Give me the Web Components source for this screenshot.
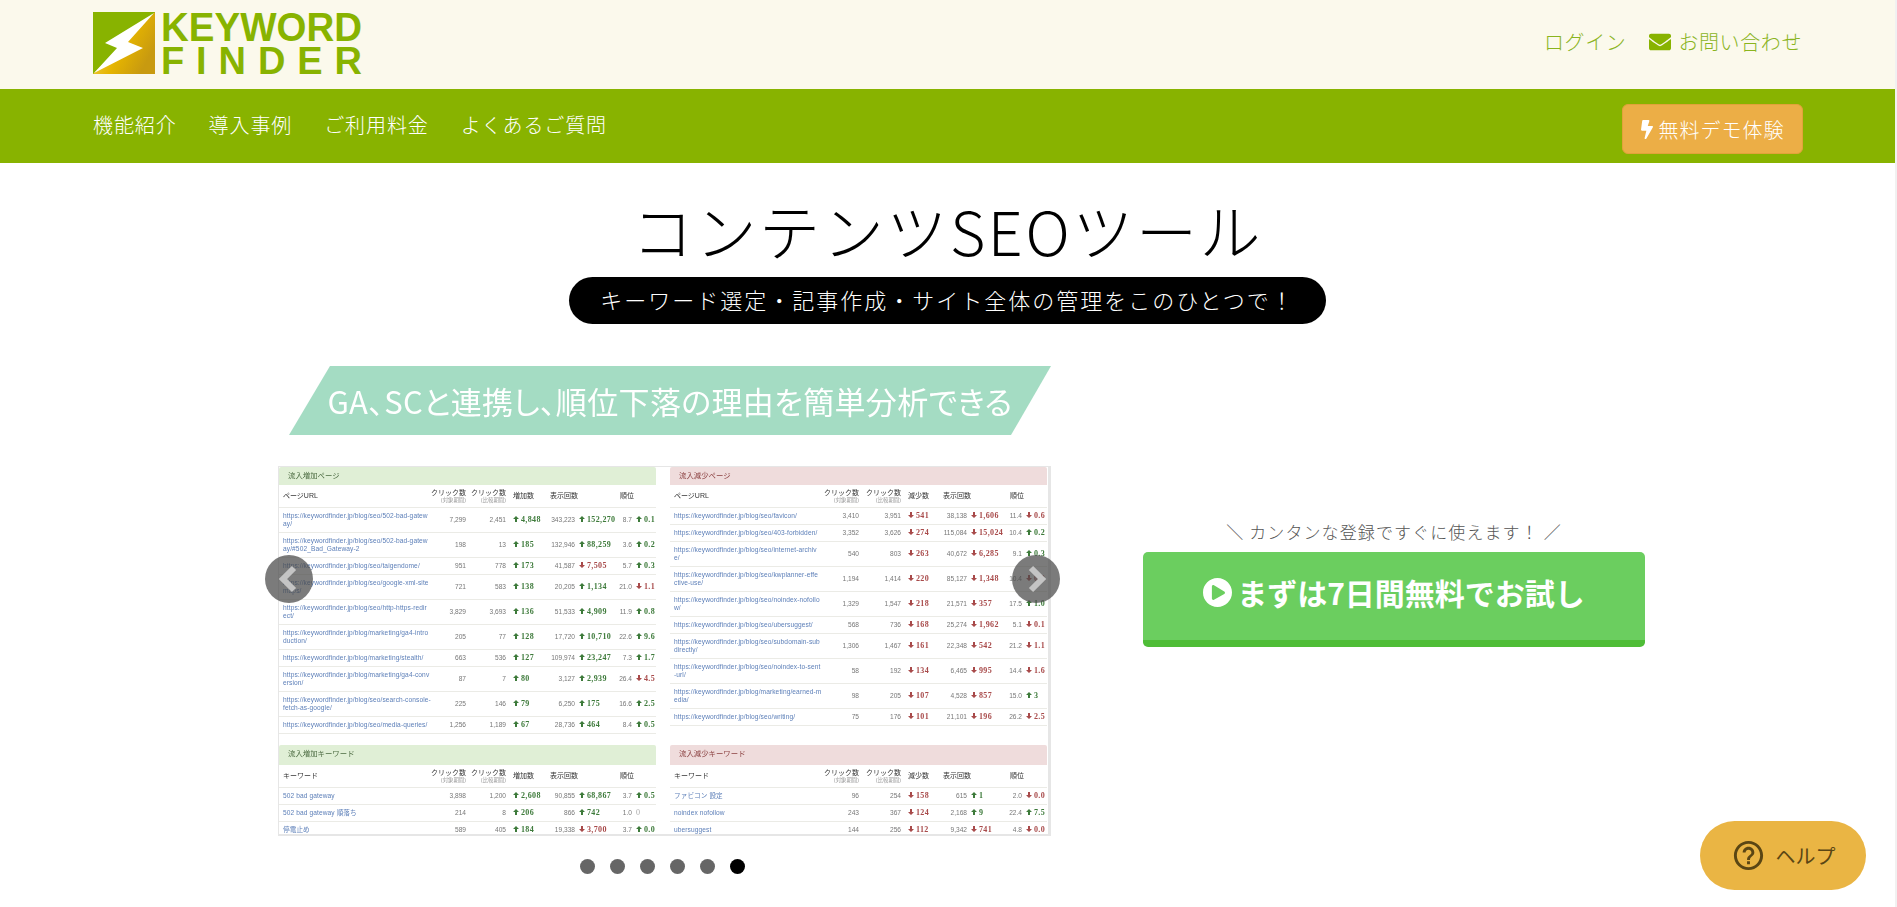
<!DOCTYPE html>
<html lang="ja">
<head>
<meta charset="utf-8">
<title>KEYWORD FINDER</title>
<style>
    html, body { margin: 0; height: 907px; overflow: hidden; background: #fff; }
    body { font-family: "Noto Sans CJK JP", "Noto Sans", sans-serif; }
</style>
</head>
<body>
<kf-page>
    <kf-header></kf-header>
    <kf-nav></kf-nav>
    <kf-hero></kf-hero>
    <kf-help></kf-help>
</kf-page>

<script>
const BLOG = 'https://keywordfinder.jp/blog/';

const PAGES_UP = [
    ['seo/502-bad-gatew\nay/', '7,299', '2,451', '+4,848', '343,223', '+152,270', '8.7', '+0.1'],
    ['seo/502-bad-gatew\nay/#502_Bad_Gateway-2', '198', '13', '+185', '132,946', '+88,259', '3.6', '+0.2'],
    ['seo/taigendome/', '951', '778', '+173', '41,587', '-7,505', '5.7', '+0.3'],
    ['seo/google-xml-site\nmaps/', '721', '583', '+138', '20,205', '+1,134', '21.0', '-1.1'],
    ['seo/http-https-redir\nect/', '3,829', '3,693', '+136', '51,533', '+4,909', '11.9', '+0.8'],
    ['marketing/ga4-intro\nduction/', '205', '77', '+128', '17,720', '+10,710', '22.6', '+9.6'],
    ['marketing/stealth/', '663', '536', '+127', '109,974', '+23,247', '7.3', '+1.7'],
    ['marketing/ga4-conv\nersion/', '87', '7', '+80', '3,127', '+2,939', '26.4', '-4.5'],
    ['seo/search-console-\nfetch-as-google/', '225', '146', '+79', '6,250', '+175', '16.6', '+2.5'],
    ['seo/media-queries/', '1,256', '1,189', '+67', '28,736', '+464', '8.4', '+0.5']
].map(r => [BLOG + r[0], ...r.slice(1)]);

const PAGES_DOWN = [
    ['seo/favicon/', '3,410', '3,951', '-541', '38,138', '-1,606', '11.4', '-0.6'],
    ['seo/403-forbidden/', '3,352', '3,626', '-274', '115,084', '-15,024', '10.4', '+0.2'],
    ['seo/internet-archiv\ne/', '540', '803', '-263', '40,672', '-6,285', '9.1', '+0.3'],
    ['seo/kwplanner-effe\nctive-use/', '1,194', '1,414', '-220', '85,127', '-1,348', '10.4', '-0.2'],
    ['seo/noindex-nofollo\nw/', '1,329', '1,547', '-218', '21,571', '-357', '17.5', '+1.0'],
    ['seo/ubersuggest/', '568', '736', '-168', '25,274', '-1,962', '5.1', '-0.1'],
    ['seo/subdomain-sub\ndirectly/', '1,306', '1,467', '-161', '22,348', '-542', '21.2', '-1.1'],
    ['seo/noindex-to-sent\n-url/', '58', '192', '-134', '6,465', '-995', '14.4', '-1.6'],
    ['marketing/earned-m\nedia/', '98', '205', '-107', '4,528', '-857', '15.0', '+3'],
    ['seo/writing/', '75', '176', '-101', '21,101', '-196', '26.2', '-2.5']
].map(r => [BLOG + r[0], ...r.slice(1)]);

const KEYWORDS_UP = [
    ['502 bad gateway', '3,898', '1,200', '+2,608', '90,855', '+68,867', '3.7', '+0.5'],
    ['502 bad gateway 順落ち', '214', '8', '+206', '866', '+742', '1.0', '0'],
    ['停電止め', '589', '405', '+184', '19,338', '-3,700', '3.7', '+0.0']
];

const KEYWORDS_DOWN = [
    ['ファビコン 設定', '96', '254', '-158', '615', '+1', '2.0', '-0.0'],
    ['noindex nofollow', '243', '367', '-124', '2,168', '+9', '22.4', '+7.5'],
    ['ubersuggest', '144', '256', '-112', '9,342', '-741', '4.8', '-0.0']
];

class KfPage extends HTMLElement {
    constructor() {
        super();
        this.attachShadow({ mode: 'open' });
        this.shadowRoot.innerHTML = `
            <style>
                :host {
                    display: block;
                    height: 907px;
                    overflow: hidden;
                    border-right: 2px solid #f1f1f1;
                }
            </style>
            <slot></slot>
        `;
    }
}

class KfHeader extends HTMLElement {
    constructor() {
        super();
        this.attachShadow({ mode: 'open' });
        this.shadowRoot.innerHTML = `
            <style>
                :host {
                    display: flex;
                    justify-content: space-between;
                    height: 89px;
                    padding: 12px 93px 0;
                    box-sizing: border-box;
                    background: #fbf9ec;
                    color: #8ab41e;
                }
                svg.logo { display: block; width: 270px; height: 63px; overflow: visible; }
                svg.logo text { font-family: "Liberation Sans", sans-serif; font-weight: 700; fill: #88b300; }
                .links {
                    display: flex;
                    align-items: center;
                    height: 44px;
                    font-size: 20px;
                    font-weight: 300;
                    letter-spacing: .6px;
                    line-height: 30px;
                    margin-top: 8px;
                }
                .login { margin-right: 23px; }
                .mail { width: 22px; height: 22px; margin-right: 7px; fill: #88b300; }
            </style>
            <svg class="logo" viewBox="0 0 270 63" role="img" aria-label="KEYWORD FINDER">
                <defs>
                    <linearGradient id="gold" x1="0" y1="0" x2="1" y2=".55">
                        <stop offset="0" stop-color="#f6e27a"/>
                        <stop offset=".62" stop-color="#e5b400"/>
                        <stop offset="1" stop-color="#c89a10"/>
                    </linearGradient>
                </defs>
                <rect width="62" height="62" fill="#88b300"/>
                <polygon points="62,0 62,62 0,62" fill="url(#gold)"/>
                <polygon points="61,1 12,31 24,36 1,61 50,36 35,30" fill="#fff"/>
                <text x="68" y="29" font-size="40" textLength="201" lengthAdjust="spacingAndGlyphs">KEYWORD</text>
                <text x="68" y="62" font-size="38" textLength="201" lengthAdjust="spacing">FINDER</text>
            </svg>
            <div class="links">
                <span class="login">ログイン</span>
                <svg class="mail" viewBox="0 0 512 512"><path d="M502.3 190.8c3.9-3.1 9.7-.2 9.7 4.7V400c0 26.5-21.5 48-48 48H48c-26.5 0-48-21.5-48-48V195.6c0-5 5.7-7.8 9.7-4.7 22.4 17.4 52.1 39.5 154.1 113.6 21.1 15.4 56.7 47.8 92.2 47.6 35.7.3 72-32.8 92.3-47.6 102-74.1 131.6-96.3 154-113.7zM256 320c23.2.4 56.6-29.2 73.4-41.4 132.7-96.3 142.8-104.7 173.4-128.7 5.8-4.5 9.2-11.5 9.2-18.9v-19c0-26.5-21.5-48-48-48H48C21.5 64 0 85.5 0 112v19c0 7.4 3.4 14.3 9.2 18.9 30.6 23.9 40.7 32.4 173.4 128.7 16.8 12.2 50.2 41.8 73.4 41.4z"/></svg>
                <span>お問い合わせ</span>
            </div>
        `;
    }
}

class KfNav extends HTMLElement {
    constructor() {
        super();
        this.attachShadow({ mode: 'open' });
        this.shadowRoot.innerHTML = `
            <style>
                :host {
                    display: flex;
                    justify-content: space-between;
                    align-items: flex-start;
                    height: 74px;
                    padding: 0 92px 0 93px;
                    box-sizing: border-box;
                    background: #88b300;
                    color: #fff;
                }
                ul {
                    display: flex;
                    gap: 32px;
                    list-style: none;
                    margin: 0;
                    padding: 21px 0 0;
                    font-size: 20px;
                    font-weight: 300;
                    letter-spacing: .9px;
                    line-height: 30px;
                }
                .demo {
                    display: flex;
                    align-items: center;
                    justify-content: center;
                    gap: 6px;
                    width: 181px;
                    height: 50px;
                    margin-top: 15px;
                    box-sizing: border-box;
                    background: #ecae46;
                    border: 1px solid #e2a23a;
                    border-radius: 6px;
                    font-size: 20px;
                    font-weight: 300;
                    letter-spacing: 1px;
                }
                .demo svg { width: 12px; height: 21px; fill: #fff; }
            </style>
            <ul>
                <li>機能紹介</li>
                <li>導入事例</li>
                <li>ご利用料金</li>
                <li>よくあるご質問</li>
            </ul>
            <div class="demo">
                <svg viewBox="0 0 320 512"><path d="M296 160H180.6l42.6-129.8C227.2 15 215.7 0 200 0H56C44 0 33.8 8.9 32.2 20.8l-32 240C-1.7 275.2 9.5 288 24 288h118.7L96.6 482.5c-3.6 15.2 8 29.5 23.3 29.5 8.4 0 16.4-4.4 20.8-12l176-304c9.3-15.9-2.2-36-20.7-36z"/></svg>
                <span>無料デモ体験</span>
            </div>
        `;
    }
}

class KfHero extends HTMLElement {
    constructor() {
        super();
        this.attachShadow({ mode: 'open' });
        this.shadowRoot.innerHTML = `
            <style>
                :host { display: block; }
                .head { display: flex; flex-direction: column; align-items: center; padding-top: 32px; }
                h1 {
                    margin: 0;
                    font-size: 61px;
                    font-weight: 300;
                    line-height: 70px;
                    letter-spacing: 2.6px;
                    color: #000;
                }
                .pill {
                    margin-top: 12px;
                    height: 47px;
                    line-height: 45px;
                    padding: 0 31px;
                    background: #000;
                    color: #fff;
                    border-radius: 24px;
                    font-size: 22px;
                    font-weight: 300;
                    letter-spacing: 2px;
                }
                .row {
                    display: grid;
                    grid-template-columns: 773px 502px;
                    column-gap: 92px;
                    padding: 42px 0 0 278px;
                }
            </style>
            <div class="head">
                <h1>コンテンツSEOツール</h1>
                <div class="pill">キーワード選定・記事作成・サイト全体の管理をこのひとつで！</div>
            </div>
            <div class="row">
                <kf-slider></kf-slider>
                <kf-cta></kf-cta>
            </div>
        `;
    }
}

class KfSlider extends HTMLElement {
    constructor() {
        super();
        this.attachShadow({ mode: 'open' });
        this.shadowRoot.innerHTML = `
            <style>
                :host { display: block; position: relative; }
                .banner {
                    margin-left: 11px;
                    height: 69px;
                    line-height: 69px;
                    background: #a4dcc3;
                    clip-path: polygon(41px 0, 100% 0, 722px 100%, 0 100%);
                    color: #fff;
                    text-align: center;
                    font-size: 31px;
                    font-weight: 400;
                    letter-spacing: .35px;
                    font-feature-settings: "palt";
                    filter: blur(.35px);
                }
                .slide {
                    position: relative;
                    display: grid;
                    grid-template-columns: 377px 377px;
                    grid-template-rows: 278px 89px;
                    column-gap: 14px;
                    align-content: start;
                    width: 773px;
                    height: 370px;
                    margin-top: 31px;
                    box-sizing: border-box;
                    overflow: hidden;
                    background: #fff;
                    border-style: solid;
                    border-color: #e6e6e6;
                    border-width: 1px 3px 2px 1px;
                    filter: blur(.45px);
                }
                .arrow {
                    position: absolute;
                    top: 189px;
                    width: 48px;
                    height: 48px;
                    border-radius: 50%;
                    background: rgba(72, 72, 72, .72);
                    display: flex;
                    align-items: center;
                    justify-content: center;
                    filter: blur(.4px);
                }
                .arrow svg { width: 22px; height: 28px; }
                .arrow.prev { left: -13px; }
                .arrow.next { left: 734px; }
                .dots {
                    display: flex;
                    gap: 15px;
                    margin: 23px 0 0 302px;
                }
                .dots i { display: block; width: 15px; height: 15px; border-radius: 50%; background: #666; }
                .dots i:last-child { background: #000; }
            </style>
            <div class="banner">GA、SCと連携し、順位下落の理由を簡単分析できる</div>
            <div class="slide"></div>
            <div class="arrow prev"><svg viewBox="0 0 22 28"><path d="M16 3 5 14l11 11" fill="none" stroke="#c4c4c4" stroke-width="6"/></svg></div>
            <div class="arrow next"><svg viewBox="0 0 22 28"><path d="M6 3l11 11L6 25" fill="none" stroke="#c4c4c4" stroke-width="6"/></svg></div>
            <div class="dots"><i></i><i></i><i></i><i></i><i></i><i></i></div>
        `;

        const slide = this.shadowRoot.querySelector('.slide');
        const panels = [
            ['up', '流入増加ページ', 'ページURL', PAGES_UP],
            ['down', '流入減少ページ', 'ページURL', PAGES_DOWN],
            ['up', '流入増加キーワード', 'キーワード', KEYWORDS_UP],
            ['down', '流入減少キーワード', 'キーワード', KEYWORDS_DOWN]
        ];
        panels.forEach(([tone, title, label, rows]) => {
            const panel = document.createElement('kf-panel');
            panel.setAttribute('tone', tone);
            panel.setAttribute('heading', title);
            panel.setAttribute('label', label);
            panel.rows = rows;
            slide.appendChild(panel);
        });
    }
}

class KfPanel extends HTMLElement {
    constructor() {
        super();
        this.attachShadow({ mode: 'open' });
    }

    connectedCallback() {
        this.render();
    }

    deltaCell(value, extraClass) {
        const sign = value[0];
        if (sign !== '+' && sign !== '-') {
            return `<span class="d zero ${extraClass}">${value}</span>`;
        }
        const points = sign === '+' ? '3,0 6,3 4,3 4,6 2,6 2,3 0,3' : '3,6 6,3 4,3 4,0 2,0 2,3 0,3';
        const tone = sign === '+' ? 'plus' : 'minus';
        return `<span class="d ${tone} ${extraClass}"><svg viewBox="0 0 6 6"><polygon points="${points}"/></svg>${value.slice(1)}</span>`;
    }

    render() {
        const down = this.getAttribute('tone') === 'down';
        const keywords = this.getAttribute('label') === 'キーワード';
        const rows = (this.rows || []).map(r => `
            <div class="row">
                <span class="url">${r[0]}</span>
                <span class="n">${r[1]}</span>
                <span class="n">${r[2]}</span>
                ${this.deltaCell(r[3], 'd1')}
                <span class="n">${r[4]}</span>
                ${this.deltaCell(r[5], 'd2')}
                <span class="n">${r[6]}</span>
                ${this.deltaCell(r[7], 'd2')}
            </div>
        `).join('');

        this.shadowRoot.innerHTML = `
            <style>
                :host {
                    display: block;
                    font-family: "Liberation Sans", "Noto Sans CJK JP", sans-serif;
                    font-size: 6.6px;
                    line-height: 8px;
                    color: #666;
                    --cols: ${down ? '156px 29px 42px 49px 17px 34px 21px 25px' : '149px 34px 40px 44px 25px 41px 16px 22px'};
                    --imp-shift: ${down ? '-7px' : '0px'};
                    --rank-shift: ${down ? '9px' : '4px'};
                }
                .title {
                    height: ${keywords ? '20px' : '18px'};
                    line-height: 18px;
                    padding-left: 9px;
                    font-size: 7.4px;
                    border-radius: 2px 2px 0 0;
                    background: ${down ? '#efdcdc' : '#e0efd6'};
                    color: ${down ? '#8a3f3f' : '#4c6b42'};
                }
                .row, .head {
                    display: grid;
                    grid-template-columns: var(--cols);
                    align-items: center;
                    padding: 4px 0 4px 4px;
                    border-bottom: 1px solid #ebebe6;
                }
                .head {
                    height: 23px;
                    box-sizing: border-box;
                    padding-top: 0;
                    padding-bottom: 0;
                    color: #333;
                    font-size: 7px;
                }
                .head .c { text-align: right; line-height: 8.5px; white-space: nowrap; justify-self: end; }
                .head .c small { display: block; font-size: 5.4px; line-height: 6.5px; color: #999; }
                .head .c:first-of-type small { color: #b5585f; }
                .head .dl { padding-left: 7px; white-space: nowrap; }
                .head .imp { grid-column: span 2; margin-left: var(--imp-shift); }
                .head .rank { grid-column: span 2; margin-left: var(--rank-shift); }
                .url {
                    color: #5c7fb8;
                    white-space: pre;
                    letter-spacing: .1px;
                }
                .n { justify-self: end; white-space: nowrap; color: #777; }
                .d {
                    white-space: nowrap;
                    font-family: "Liberation Serif", serif;
                    font-size: 8px;
                    font-weight: 700;
                    letter-spacing: .35px;
                }
                .d svg { width: 6px; height: 6px; margin-right: 2px; fill: currentColor; }
                .d1 { padding-left: 7px; }
                .d2 { padding-left: 4px; }
                .plus { color: #3d7a3a; }
                .minus { color: #a84a4a; }
                .zero { color: #aaa; font-weight: 400; }
            </style>
            <div class="title">${this.getAttribute('heading')}</div>
            <div class="head">
                <span>${this.getAttribute('label')}</span>
                <span class="c">クリック数<small>(対象期間)</small></span>
                <span class="c">クリック数<small>(比較期間)</small></span>
                <span class="dl">${down ? '減少数' : '増加数'}</span>
                <span class="imp">表示回数</span>
                <span class="rank">順位</span>
            </div>
            <div>${rows}</div>
        `;
    }
}

class KfCta extends HTMLElement {
    constructor() {
        super();
        this.attachShadow({ mode: 'open' });
        this.shadowRoot.innerHTML = `
            <style>
                :host { display: block; padding-top: 154px; }
                .note {
                    height: 24px;
                    line-height: 24px;
                    margin-bottom: 8px;
                    text-align: center;
                    color: #555;
                    font-size: 17px;
                    font-weight: 300;
                    letter-spacing: 1.1px;
                }
                .btn {
                    display: flex;
                    align-items: center;
                    justify-content: center;
                    gap: 5px;
                    height: 95px;
                    box-sizing: border-box;
                    padding-bottom: 8px;
                    background: #6bce5f;
                    border-bottom: 7px solid #4fbd37;
                    border-radius: 5px;
                    color: #fff;
                    font-size: 30px;
                    font-weight: 700;
                }
                .btn svg { width: 29px; height: 29px; fill: #fff; flex: none; }
            </style>
            <div class="note">＼ カンタンな登録ですぐに使えます！ ／</div>
            <div class="btn">
                <svg viewBox="8 8 496 496"><path d="M256 8C119 8 8 119 8 256s111 248 248 248 248-111 248-248S393 8 256 8zm115.700 272l-176 101c-15.800 8.800-35.700-2.500-35.700-21V152c0-18.400 19.800-29.800 35.700-21l176 107c16.400 9.200 16.400 32.900 0 42z"/></svg>
                <span>まずは7日間無料でお試し</span>
            </div>
        `;
    }
}

class KfHelp extends HTMLElement {
    constructor() {
        super();
        this.attachShadow({ mode: 'open' });
        this.shadowRoot.innerHTML = `
            <style>
                :host {
                    position: fixed;
                    left: 1700px;
                    top: 821px;
                    width: 166px;
                    height: 69px;
                    display: flex;
                    align-items: center;
                    justify-content: center;
                    gap: 10px;
                    border-radius: 35px;
                    background: #eab544;
                    color: #5a4614;
                    font-size: 20px;
                    font-weight: 400;
                }
                svg { width: 35px; height: 35px; fill: #5a4614; }
            </style>
            <svg viewBox="0 0 24 24"><path d="M11 18h2v-2h-2v2zm1-16C6.480 2 2 6.480 2 12s4.480 10 10 10 10-4.480 10-10S17.520 2 12 2zm0 18c-4.410 0-8-3.590-8-8s3.590-8 8-8 8 3.590 8 8-3.590 8-8 8zm0-14c-2.210 0-4 1.790-4 4h2c0-1.100.9-2 2-2s2 .9 2 2c0 2-3 1.750-3 5h2c0-2.250 3-2.500 3-5 0-2.210-1.790-4-4-4z"/></svg>
            <span>ヘルプ</span>
        `;
    }
}

customElements.define('kf-page', KfPage);
customElements.define('kf-header', KfHeader);
customElements.define('kf-nav', KfNav);
customElements.define('kf-panel', KfPanel);
customElements.define('kf-slider', KfSlider);
customElements.define('kf-cta', KfCta);
customElements.define('kf-help', KfHelp);
customElements.define('kf-hero', KfHero);
</script>
</body>
</html>
